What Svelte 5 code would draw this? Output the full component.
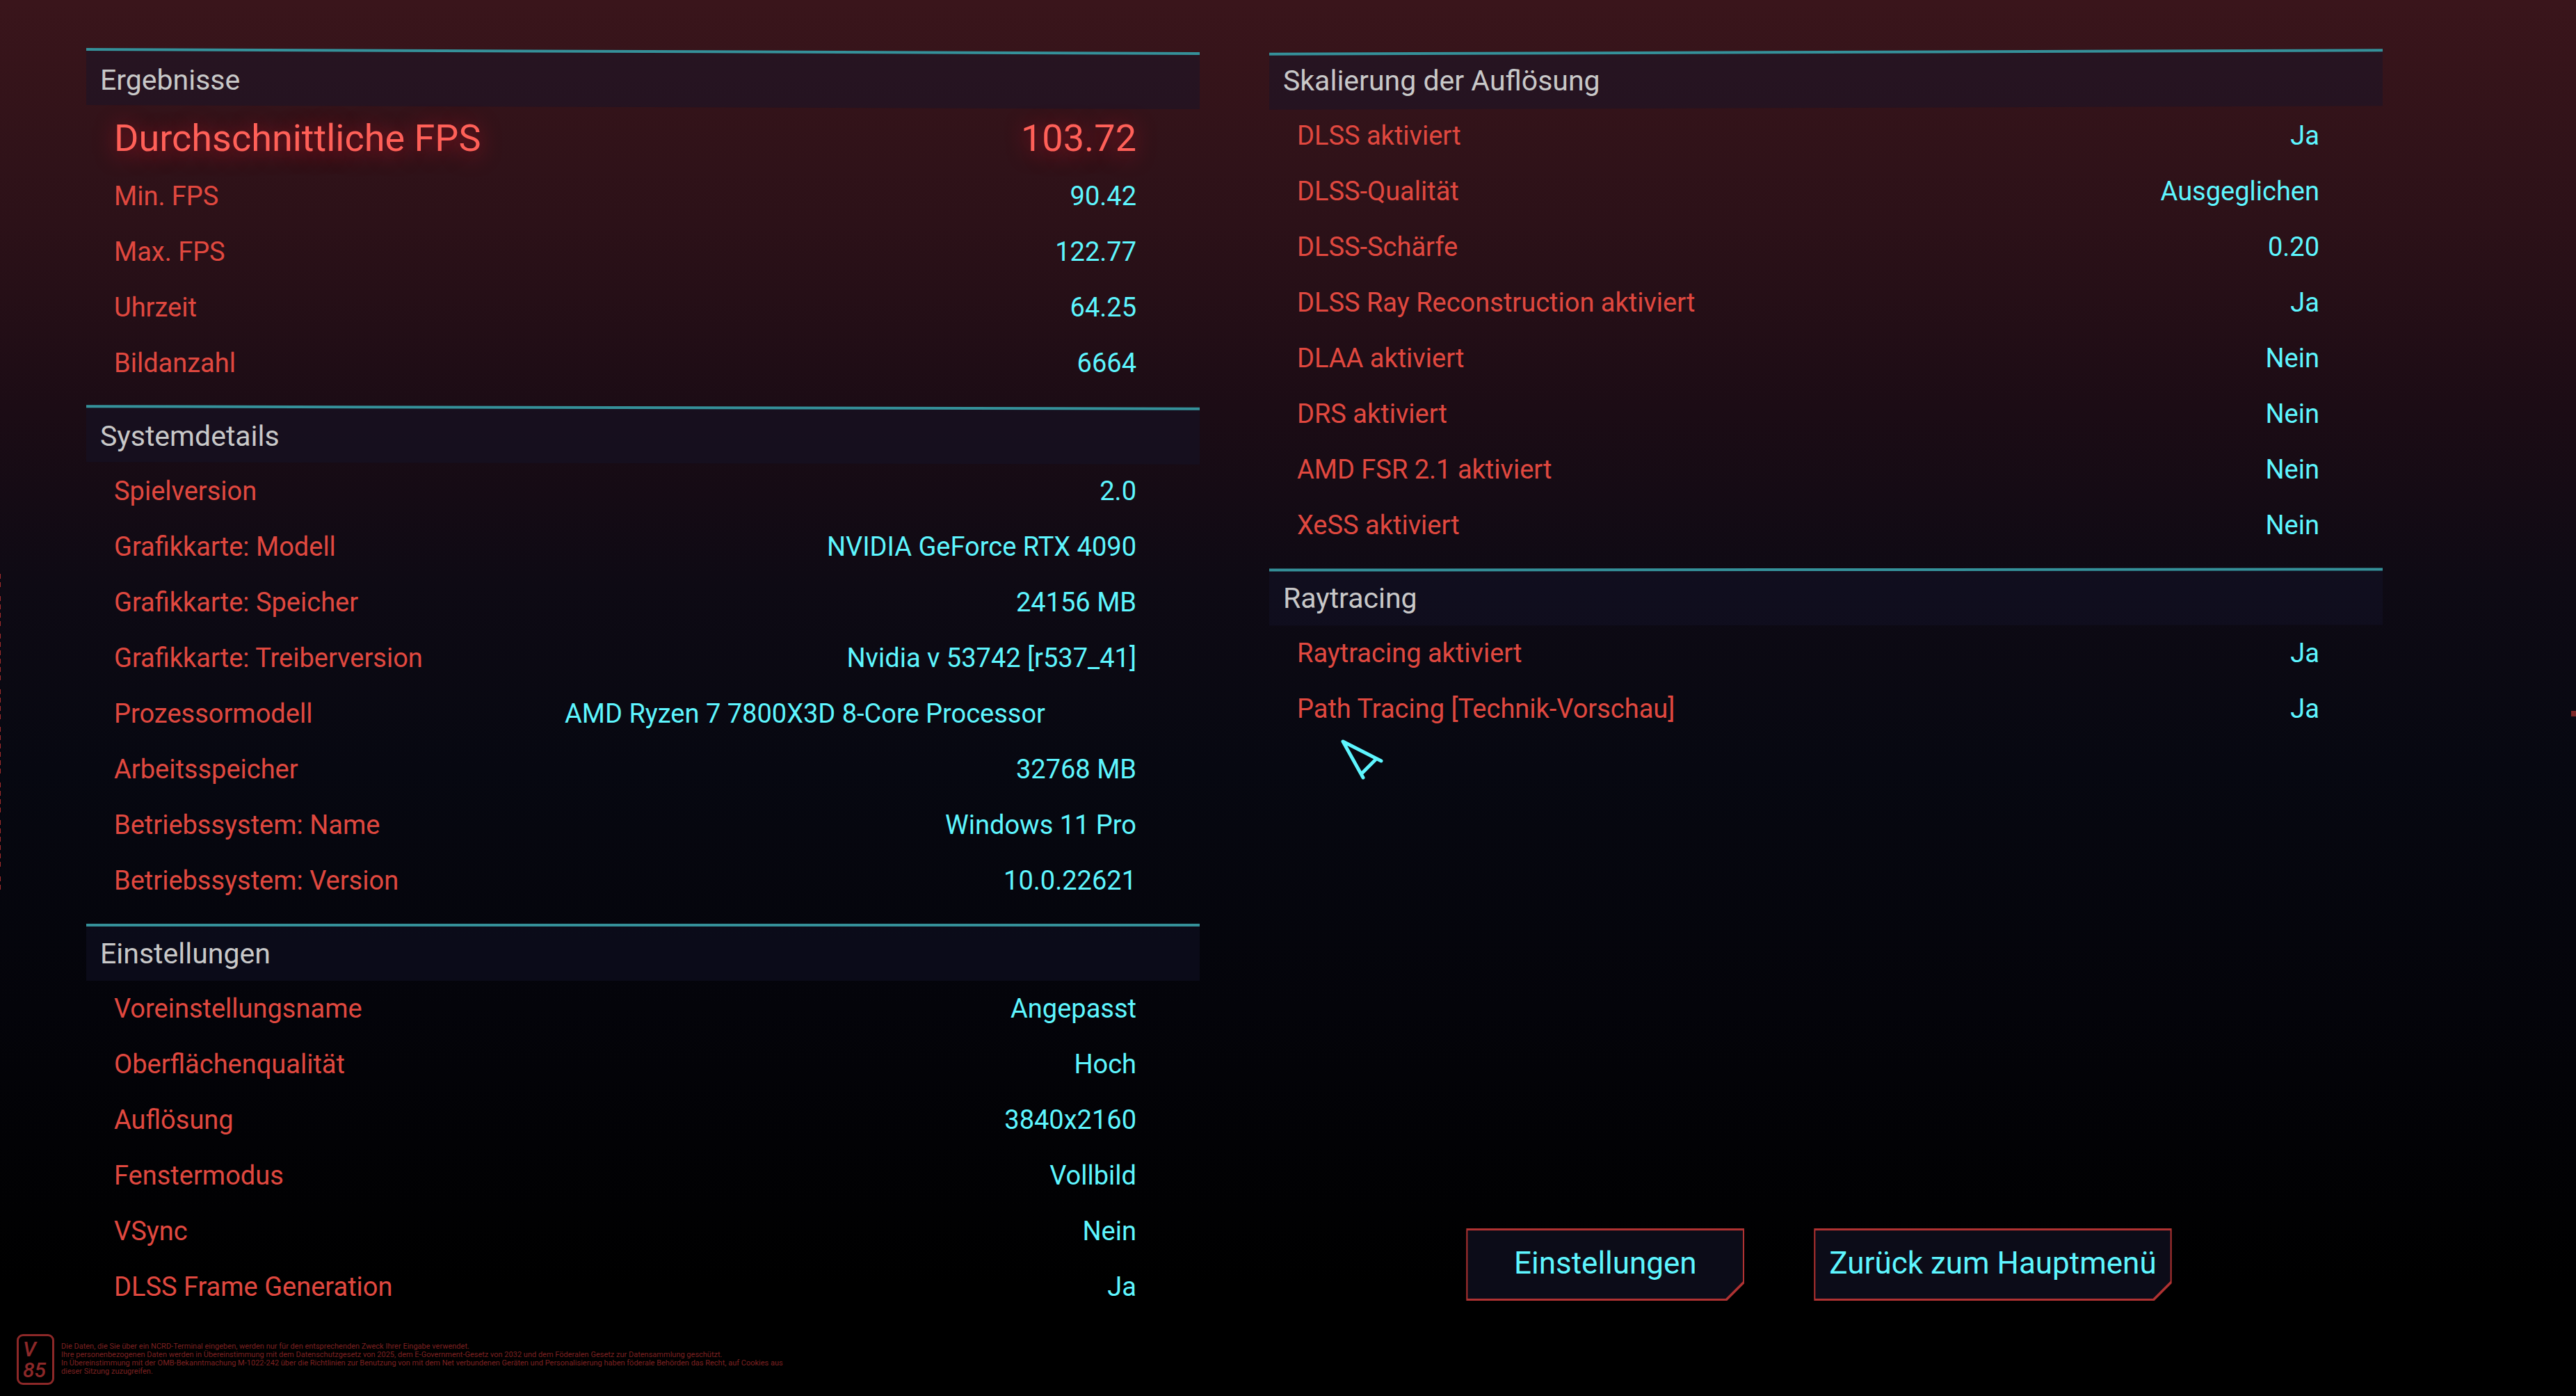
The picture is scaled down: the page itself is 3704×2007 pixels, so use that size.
<script lang="ts">
  type Row = {
    label: string;
    value: string;
    big?: boolean;
    inset?: boolean;
  };

  type Section = {
    title: string;
    tilt: number;
    rows: Row[];
  };

  const left: Section[] = [
    {
      title: 'Ergebnisse',
      tilt: 0.22,
      rows: [
        { label: 'Durchschnittliche FPS', value: '103.72', big: true },
        { label: 'Min. FPS', value: '90.42' },
        { label: 'Max. FPS', value: '122.77' },
        { label: 'Uhrzeit', value: '64.25' },
        { label: 'Bildanzahl', value: '6664' }
      ]
    },
    {
      title: 'Systemdetails',
      tilt: 0.12,
      rows: [
        { label: 'Spielversion', value: '2.0' },
        { label: 'Grafikkarte: Modell', value: 'NVIDIA GeForce RTX 4090' },
        { label: 'Grafikkarte: Speicher', value: '24156 MB' },
        { label: 'Grafikkarte: Treiberversion', value: 'Nvidia v 53742 [r537_41]' },
        { label: 'Prozessormodell', value: 'AMD Ryzen 7 7800X3D 8-Core Processor', inset: true },
        { label: 'Arbeitsspeicher', value: '32768 MB' },
        { label: 'Betriebssystem: Name', value: 'Windows 11 Pro' },
        { label: 'Betriebssystem: Version', value: '10.0.22621' }
      ]
    },
    {
      title: 'Einstellungen',
      tilt: 0,
      rows: [
        { label: 'Voreinstellungsname', value: 'Angepasst' },
        { label: 'Oberflächenqualität', value: 'Hoch' },
        { label: 'Auflösung', value: '3840x2160' },
        { label: 'Fenstermodus', value: 'Vollbild' },
        { label: 'VSync', value: 'Nein' },
        { label: 'DLSS Frame Generation', value: 'Ja' }
      ]
    }
  ];

  const right: Section[] = [
    {
      title: 'Skalierung der Auflösung',
      tilt: -0.2,
      rows: [
        { label: 'DLSS aktiviert', value: 'Ja' },
        { label: 'DLSS-Qualität', value: 'Ausgeglichen' },
        { label: 'DLSS-Schärfe', value: '0.20' },
        { label: 'DLSS Ray Reconstruction aktiviert', value: 'Ja' },
        { label: 'DLAA aktiviert', value: 'Nein' },
        { label: 'DRS aktiviert', value: 'Nein' },
        { label: 'AMD FSR 2.1 aktiviert', value: 'Nein' },
        { label: 'XeSS aktiviert', value: 'Nein' }
      ]
    },
    {
      title: 'Raytracing',
      tilt: -0.04,
      rows: [
        { label: 'Raytracing aktiviert', value: 'Ja' },
        { label: 'Path Tracing [Technik-Vorschau]', value: 'Ja' }
      ]
    }
  ];

  const legal = [
    'Die Daten, die Sie über ein NCRD-Terminal eingeben, werden nur für den entsprechenden Zweck Ihrer Eingabe verwendet.',
    'Ihre personenbezogenen Daten werden in Übereinstimmung mit dem Datenschutzgesetz von 2025, dem E-Government-Gesetz von 2032 und dem Föderalen Gesetz zur Datensammlung geschützt.',
    'In Übereinstimmung mit der OMB-Bekanntmachung M-1022-242 über die Richtlinien zur Benutzung von mit dem Net verbundenen Geräten und Personalisierung haben föderale Behörden das Recht, auf Cookies aus',
    'dieser Sitzung zuzugreifen.'
  ];

  // Ticks on the left screen edge: [start, count]
  const ticks = [
    [0, 2],
    [32, 4],
    [86, 6],
    [166, 4],
    [220, 6],
    [300, 4],
    [354, 6],
    [435, 2]
  ].flatMap(([start, count]) => Array.from({ length: count }, (_, i) => start + i * 12));
</script>

{#snippet panel(section: Section)}
  <section class="section">
    <h2 class="title" style="--tilt: {section.tilt}deg">{section.title}</h2>
    <dl class="rows">
      {#each section.rows as row}
        <div class="row" class:big={row.big}>
          <dt>{row.label}</dt>
          <dd class:inset={row.inset}>{row.value}</dd>
        </div>
      {/each}
    </dl>
  </section>
{/snippet}

<div class="screen">
  <main class="columns">
    <div class="column">
      {#each left as section}
        {@render panel(section)}
      {/each}
    </div>

    <div class="column">
      {#each right as section}
        {@render panel(section)}
      {/each}

      <nav class="actions">
        <button class="action" type="button">Einstellungen</button>
        <button class="action" type="button">Zurück zum Hauptmenü</button>
      </nav>
    </div>
  </main>

  <footer class="footer">
    <div class="badge">
      <span>V</span>
      <span>85</span>
    </div>
    <p class="legal">
      {#each legal as line}
        <span>{line}</span>
      {/each}
    </p>
  </footer>

  <svg class="ticks" width="1" height="456" aria-hidden="true">
    {#each ticks as y}
      <rect x="0" {y} width="1" height="7" />
    {/each}
  </svg>
  <span class="edge-mark"></span>

  <svg class="cursor" width="64" height="62" viewBox="0 0 64 62" aria-hidden="true">
    <path d="M34 57 5 5l55 28M52 31 32 51" />
  </svg>
</div>

<style>
  :global(body) {
    margin: 0;
    background: #000;
  }

  .screen {
    --cyan: #5ef6ff;
    --red: #e0483f;

    position: relative;
    display: flex;
    flex-direction: column;
    box-sizing: border-box;
    min-height: 100vh;
    overflow: hidden;
    font-family: Roboto, "Liberation Sans", sans-serif;
    font-size: 38px;
    background: linear-gradient(
      #3a151b 0%,
      #2c1118 16%,
      #1c0c15 29%,
      #0e0a14 42%,
      #070811 55%,
      #04040a 72%,
      #000 92%
    );
  }

  .columns {
    display: grid;
    grid-template-columns: 1fr 1fr;
    gap: 100px;
    padding: 72px 278px 0 124px;
  }

  .column {
    display: flex;
    flex-direction: column;
    gap: 22px;
    min-width: 0;
  }

  .column + .column {
    padding-top: 1px;
  }

  .title {
    position: relative;
    z-index: 0;
    box-sizing: border-box;
    height: 82px;
    margin: 0;
    padding: 0 20px;
    font-size: 41px;
    font-weight: 400;
    line-height: 86px;
    color: #c8c8c8;
  }

  .title::before {
    content: "";
    position: absolute;
    inset: 0;
    z-index: -1;
    border-top: 4px solid #35919a;
    background: rgba(20, 21, 42, 0.45);
    transform: skewY(var(--tilt));
  }

  .rows {
    margin: 0;
  }

  .row {
    display: flex;
    align-items: center;
    justify-content: space-between;
    height: 80px;
    padding: 0 91px 0 40px;
  }

  dt {
    color: var(--red);
  }

  dd {
    margin: 0;
    color: var(--cyan);
  }

  dd.inset {
    padding-right: 131px;
  }

  .row.big {
    height: 88px;
    font-size: 54px;
  }

  .big dt,
  .big dd {
    color: #ff6058;
    text-shadow: 0 4px 30px rgba(255, 20, 40, 0.6);
  }

  .actions {
    display: flex;
    justify-content: center;
    gap: 100px;
    margin-top: auto;
    padding: 0 20px 20px 0;
  }

  .action {
    --shape: polygon(0 0, 100% 0, 100% calc(100% - 25px), calc(100% - 25px) 100%, 0 100%);

    position: relative;
    z-index: 0;
    min-width: 400px;
    height: 104px;
    padding: 0 22px 4px;
    border: 0;
    font: inherit;
    font-size: 44px;
    color: var(--cyan);
    background: #b03232;
    clip-path: var(--shape);
    cursor: pointer;
  }

  .action::before {
    content: "";
    position: absolute;
    inset: 3px 2px;
    z-index: -1;
    background: #0c0c18;
    clip-path: var(--shape);
  }

  .footer {
    display: flex;
    gap: 10px;
    padding: 28px 24px 16px;
  }

  .badge {
    display: flex;
    flex-direction: column;
    box-sizing: border-box;
    width: 54px;
    height: 73px;
    padding: 4px 6px;
    border: 3px solid #8c2828;
    border-radius: 9px;
    font-size: 30px;
    font-style: italic;
    font-weight: 500;
    line-height: 30px;
    color: #8c2828;
  }

  .legal {
    display: flex;
    flex-direction: column;
    margin: 0;
    padding-top: 12px;
    font-size: 11px;
    line-height: 12px;
    color: #7e2020;
  }

  .ticks {
    position: absolute;
    top: 825px;
    left: 0;
    fill: #a02c2c;
  }

  .edge-mark {
    position: absolute;
    top: 1022px;
    right: 0;
    width: 7px;
    height: 8px;
    background: #7c2626;
  }

  .cursor {
    position: absolute;
    top: 1061px;
    left: 1926px;
    fill: none;
    stroke: var(--cyan);
    stroke-width: 5;
    stroke-linecap: round;
    stroke-linejoin: round;
  }
</style>
